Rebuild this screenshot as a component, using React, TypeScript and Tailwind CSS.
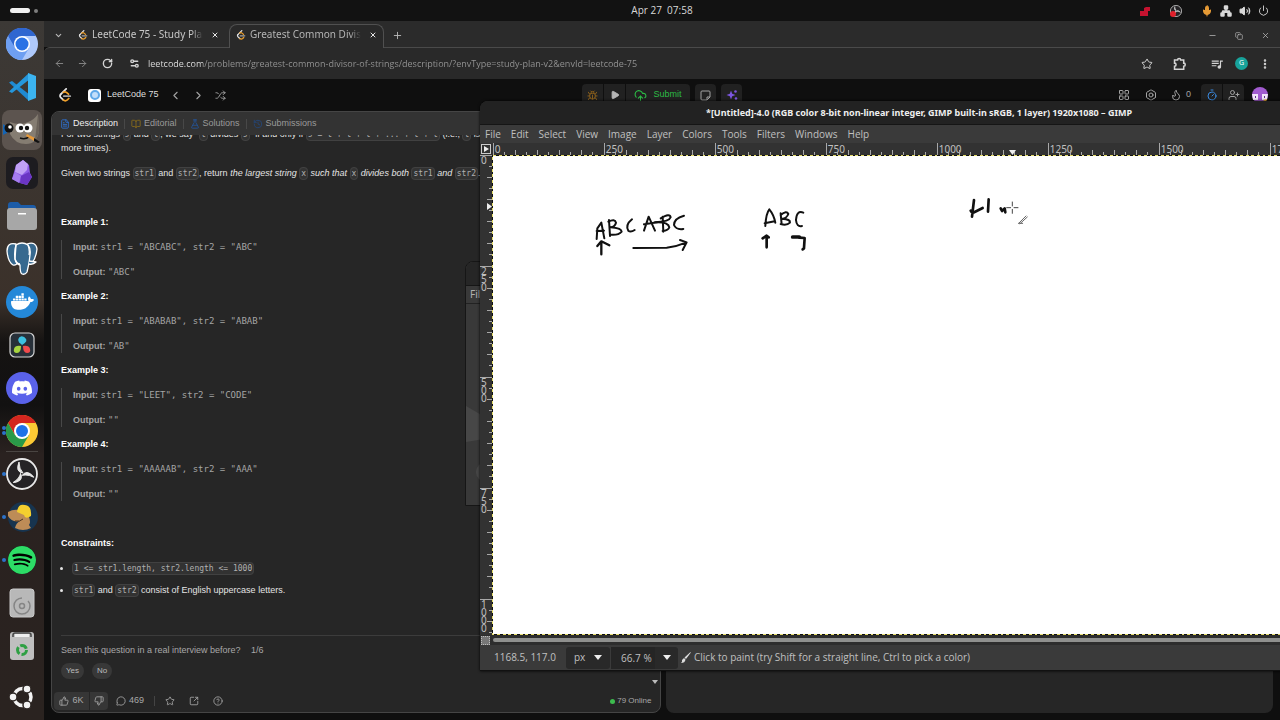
import type { ReactNode } from 'react';
import {
  ArrowLeft,
  ArrowRight,
  Bolt,
  BookOpen,
  Bug,
  ChevronDown,
  ChevronLeft,
  ChevronRight,
  CircleHelp,
  CloudUpload,
  Copy,
  EllipsisVertical,
  FileText,
  Flame,
  FlaskConical,
  History,
  LayoutGrid,
  MessageCircle,
  Mic,
  Minus,
  Network,
  Play,
  Plus,
  Power,
  RotateCw,
  Settings2,
  Shuffle,
  SquareArrowOutUpRight,
  Star,
  ThumbsDown,
  ThumbsUp,
  Timer,
  UserPlus,
  Volume2,
  X,
} from 'lucide-react';
import { MdQueueMusic } from 'react-icons/md';
import { SiDiscord, SiDocker, SiSpotify } from 'react-icons/si';

const LeetCodeLogo = ({ size }: { size: number }) => (
  <svg width={size} height={size} viewBox="0 0 24 24" fill="none" strokeWidth="3" strokeLinecap="round">
    <path d="M14 1.500 4.500 11" stroke="#e5e5e5" />
    <path d="M4.500 11q-2 2.500 0 5l4.500 4.500" stroke="#e5e5e5" />
    <path d="M9 20.500q3.500 3 7 0l2.500-2.500M9 7.500q3-2 5.500 0l3.500 3" stroke="#f0a02a" />
    <path d="M10 14h11" stroke="#a3a3a3" />
  </svg>
);

const ChromiumIcon = () => (
  <svg width="32" height="32" viewBox="0 0 32 32">
    <circle cx="16" cy="16" r="16" fill="#afc9fb" />
    <path d="M2 8A16 16 0 0 1 30 8H16L8 20z" fill="#2f66d0" />
    <path d="M2 8A16 16 0 0 0 16 32l7-12-13 1z" fill="#6e9ff2" />
    <circle cx="16" cy="16" r="8" fill="#fff" />
    <circle cx="16" cy="16" r="6.500" fill="#2a72e5" />
  </svg>
);

const ChromeIcon = () => (
  <svg width="32" height="32" viewBox="0 0 32 32">
    <circle cx="16" cy="16" r="16" fill="#fcc934" />
    <path d="M2.100 8A16 16 0 0 1 29.900 8H16L9 20z" fill="#d4261f" />
    <path d="M2.100 8A16 16 0 0 0 16 32l7-12-14 0z" fill="#2a9a48" />
    <circle cx="16" cy="16" r="8" fill="#fff" />
    <circle cx="16" cy="16" r="6" fill="#1d72e8" />
  </svg>
);

const VsCodeIcon = () => (
  <svg width="28" height="28" viewBox="0 0 28 28">
    <path d="M1 9.500 4 8l18 14-1 6z" fill="#1f8ad2" />
    <path d="M1 18.500 4 20 22 6l-1-6z" fill="#2597dc" />
    <path d="M20 0l8 3v22l-8 3z" fill="#3cb4f0" />
  </svg>
);

const GimpIcon = () => (
  <svg width="40" height="36" viewBox="0 0 40 36">
    <path d="M1 12l4 3v6l-4 2z" fill="#1565b5" />
    <path d="M8 10q10 4 18 0 6-2 10-8l1 17q-2 13-13 13T8 22z" fill="#857d72" />
    <path d="M36 2l1 17q-1 6-4 9z" fill="#6a6259" />
    <circle cx="7" cy="16" r="4.500" fill="#111" />
    <circle cx="8" cy="15" r="1.800" fill="#fff" />
    <circle cx="18" cy="16" r="4.500" fill="#fff" />
    <circle cx="26" cy="16" r="4.500" fill="#fff" />
    <circle cx="19" cy="16" r="2.200" fill="#111" />
    <circle cx="25" cy="16" r="2.200" fill="#111" />
    <path d="M18 26q6 2 10-2" stroke="#111" strokeWidth="1.500" fill="none" />
    <path d="M25 22l8 4-1 3-8-5z" fill="#e79a3a" />
    <path d="M32 26l6 4-2 1-4-2z" fill="#111" />
  </svg>
);

const ObsidianIcon = () => (
  <svg width="32" height="32" viewBox="0 0 32 32">
    <rect width="32" height="32" rx="7" fill="#1d1c20" />
    <path d="M17 3l6 5 1 8 2 4-5 8-7-2-8-4 2-7 2-7z" fill="#8d5be6" />
    <path d="M17 3l-7 5-1 7 7 3 5-5 1-6z" fill="#c0a0f5" />
    <path d="M9 15l6 4-2 7-7-4z" fill="#a57cf0" />
    <path d="M15 19l8-4 3 5-5 8-7-2z" fill="#6a35c4" />
  </svg>
);

const FilesIcon = () => (
  <svg width="30" height="28" viewBox="0 0 30 28">
    <path d="M1 3q0-3 3-3h7l3 3h12q3 0 3 3v6H1z" fill="#1c5ca8" />
    <rect y="6" width="30" height="22" rx="3" fill="#a7a7a7" />
    <rect x="11" y="11" width="8" height="1.500" fill="#fff" />
  </svg>
);

const PostgresIcon = () => (
  <svg width="32" height="34" viewBox="0 0 32 34" fill="#37698f" stroke="#fff" strokeWidth="1.300" strokeLinejoin="round">
    <path d="M10 2Q1 0 1 9q1 11 6 14 3 1 5-3z" />
    <path d="M21 2q9-3 10 5-1 9-5 14l-5-3z" />
    <path d="M10 3q6-4 12 0 3 4 2 10l-1 8-2 9q-2 3-5 2-2-1-2-9-4-1-5-6z" />
    <path d="M23 22q4 1 7-2l-7-1" />
    <path d="M10 3q-2 6-1 14 2 5 5 5M22 3q2 5 1 10" fill="none" />
  </svg>
);

const DavinciIcon = () => (
  <svg width="26" height="26" viewBox="0 0 26 26">
    <rect x="1" y="1" width="24" height="24" rx="5" fill="#273039" stroke="#d5d5d5" strokeWidth="1.200" />
    <path d="M13 13Q8 9 10 6t6 0-3 7z" fill="#3cc0e0" />
    <circle cx="13" cy="8" r="3.500" fill="#3cc0e0" />
    <path d="M12 14q0 7-4 7t-3-4 7-3z" fill="#a7d440" />
    <path d="M14 14q0 7 4 7t3-4-7-3z" fill="#ef4a4c" />
  </svg>
);

const ObsIcon = ({ size }: { size: number }) => (
  <svg width={size} height={size} viewBox="0 0 32 32" fill="none" stroke="#e8e8e8">
    <circle cx="16" cy="16" r="15" fill="#252326" strokeWidth="1.800" />
    {['rotate(0 16 16)', 'rotate(120 16 16)', 'rotate(240 16 16)'].map((turn) => (
      <path key={turn} d="M17 15Q9 14 13 4q0 7 4 11z" fill="#e8e8e8" strokeWidth="1" transform={turn} />
    ))}
  </svg>
);

const BeaverIcon = () => (
  <svg width="32" height="32" viewBox="0 0 32 32">
    <circle cx="17" cy="16" r="15" fill="#17344f" />
    <path d="M2 11q5-3 11-2l10 7q2 5 0 8l2 3q-8 4-16 0 1-5 5-7-8 2-12-5z" fill="#bd8c57" />
    <path d="M11 11q1-9 8-7 7 1 6 11-6 4-7-1z" fill="#f4cf2f" />
    <path d="M9 20q5 1 8-2" stroke="#4d3420" fill="none" />
  </svg>
);

const DriveIcon = () => (
  <svg width="26" height="30" viewBox="0 0 26 30" fill="none" stroke="#858585">
    <rect x="1" y="1" width="24" height="28" rx="3" fill="#b8b8b8" stroke="#c9c9c9" />
    <path d="M13 10a8 8 0 1 0 8 8q0-3-2-5" strokeWidth="1.500" />
    <circle cx="13" cy="18" r="2.500" strokeWidth="1.500" />
  </svg>
);

const TrashIcon = () => (
  <svg width="26" height="30" viewBox="0 0 26 30">
    <rect x="1" y="1" width="24" height="28" rx="3" fill="#bfbfbf" />
    <path d="M4 6V4q0-2 2-2h14q2 0 2 2v2" fill="none" stroke="#444" strokeWidth="1.500" />
    <path d="M6 3h14v3H6z" fill="#eee" />
    <circle cx="13" cy="19" r="4.500" fill="none" stroke="#2ea043" strokeWidth="3" strokeDasharray="7.400 2" />
  </svg>
);

const UbuntuIcon = () => (
  <svg width="26" height="26" viewBox="0 0 26 26">
    <circle cx="13.500" cy="13" r="8.500" fill="none" stroke="#f3f3f3" strokeWidth="3.500" />
    {[
      [4, 13],
      [18, 5],
      [18, 21],
    ].map(([x, y]) => (
      <circle key={`${x}-${y}`} cx={x} cy={y} r="4" fill="#f3f3f3" stroke="#2b2522" strokeWidth="1.500" />
    ))}
  </svg>
);

interface DockItem {
  name: string;
  icon: ReactNode;
  dots?: number;
  active?: boolean;
}

const pinnedApps: DockItem[] = [
  { name: 'Chromium', icon: <ChromiumIcon /> },
  { name: 'Visual Studio Code', icon: <VsCodeIcon /> },
  { name: 'GIMP', icon: <GimpIcon />, active: true },
  { name: 'Obsidian', icon: <ObsidianIcon /> },
  { name: 'Files', icon: <FilesIcon /> },
  { name: 'PostgreSQL', icon: <PostgresIcon /> },
  {
    name: 'Docker',
    icon: (
      <span className="flex size-8 items-center justify-center rounded-full bg-[#2488d8] text-white">
        <SiDocker size={23} />
      </span>
    ),
  },
  { name: 'DaVinci Resolve', icon: <DavinciIcon /> },
  {
    name: 'Discord',
    icon: (
      <span className="flex size-8 items-center justify-center rounded-full bg-[#5a62ea] text-white">
        <SiDiscord size={20} />
      </span>
    ),
  },
  { name: 'Google Chrome', icon: <ChromeIcon />, dots: 2 },
];

const runningApps: DockItem[] = [
  { name: 'OBS Studio', icon: <ObsIcon size={32} />, dots: 1 },
  { name: 'DBeaver', icon: <BeaverIcon />, dots: 1 },
  {
    name: 'Spotify',
    icon: (
      <span className="flex size-7 items-center justify-center rounded-full bg-black text-[#2ddc66]">
        <SiSpotify size={28} />
      </span>
    ),
    dots: 1,
  },
  { name: 'Disk', icon: <DriveIcon /> },
  { name: 'Trash', icon: <TrashIcon /> },
];

const DockButton = ({ name, icon, dots = 0, active }: DockItem) => (
  <button aria-label={name} className="relative flex h-[43px] w-full items-center justify-center">
    <span className="absolute left-0.5 flex flex-col gap-px">
      {Array.from({ length: dots }, (_, i) => (
        <span key={i} className="size-1 rounded-full bg-[#2c72c9]" />
      ))}
    </span>
    <span
      className={
        active
          ? 'flex size-10 items-center justify-center rounded-lg bg-[#5c544f]'
          : 'flex items-center justify-center'
      }
    >
      {icon}
    </span>
  </button>
);

const Dock = () => (
  <nav
    aria-label="Dock"
    className="flex w-11 shrink-0 flex-col bg-[linear-gradient(#3c3936_0%,#3b312a_40%,#151312_46%,#121111_55%,#2a2220_62%,#2a2320_100%)] pt-px"
  >
    {pinnedApps.map((app) => (
      <DockButton key={app.name} {...app} />
    ))}
    <hr className="mx-1.5 -mt-px border-[#4a4542]" />
    {runningApps.map((app) => (
      <DockButton key={app.name} {...app} />
    ))}
    <button aria-label="Show apps" className="mt-auto flex h-[46px] items-center justify-center">
      <UbuntuIcon />
    </button>
  </nav>
);

const TopBar = () => (
  <header className="grid h-[21px] shrink-0 grid-cols-3 items-center bg-[#121212] px-2.5 text-[#d8d8d8]">
    <div className="flex items-center gap-1">
      <span className="h-[5px] w-5 rounded-full bg-[#efefef]" />
      <span className="size-1 rounded-full bg-[#7e7e7e]" />
    </div>
    <time className="pl-11 text-center font-['Open_Sans',sans-serif] text-[10px] whitespace-pre">Apr 27  07:58</time>
    <div className="flex items-center justify-end gap-[7px] pr-px">
      <svg width="12" height="12" viewBox="0 0 12 12" className="mr-3" fill="#c4122f">
        <path d="M1 6h4V3l2-1h4v4H9v5H1z" />
      </svg>
      <span className="relative mr-3">
        <ObsIcon size={12} />
        <span className="absolute bottom-0 left-0 size-1.5 rounded-full bg-[#e0202c]" />
      </span>
      <Mic size={12} className="text-[#e59a35]" fill="#e59a35" />
      <Network size={12} strokeWidth={3} fill="currentColor" />
      <Volume2 size={12} fill="currentColor" />
      <Power size={11} />
    </div>
  </header>
);

const Tab = ({ title, active }: { title: string; active?: boolean }) => (
  <div
    className={
      active
        ? 'relative -mb-px flex h-6 w-[155px] items-center rounded-t-lg border border-b-0 border-[#505050] bg-[#292929] px-1.5 pb-1 text-[#b4b4b4]'
        : 'flex h-[23px] w-[157px] items-center px-1.5 pb-0.5 text-[#c8c8c8]'
    }
  >
    <LeetCodeLogo size={10} />
    <span className="ml-1 w-[111px] overflow-hidden mask-r-from-90% text-[10px] whitespace-nowrap">{title}</span>
    <button aria-label="Close tab" className="ml-2 text-[#e5e5e5]">
      <X size={8} strokeWidth={3} />
    </button>
  </div>
);

const BrowserChrome = () => (
  <>
    <div className="flex h-[26px] items-end bg-[#2b2b2b] text-[#b9b9b9]">
      <button aria-label="Search tabs" className="flex h-[23px] w-7 items-center justify-center">
        <ChevronDown size={9} strokeWidth={3} />
      </button>
      <Tab title="LeetCode 75 - Study Plan" />
      <Tab title="Greatest Common Divisor" active />
      <button aria-label="New tab" className="ml-2 flex h-[23px] items-center">
        <Plus size={11} />
      </button>
      <div className="ml-auto flex h-[23px] items-center gap-[18px] pr-2.5">
        <button aria-label="Minimize">
          <Minus size={9} />
        </button>
        <button aria-label="Restore">
          <Copy size={8} />
        </button>
        <button aria-label="Close">
          <X size={9} />
        </button>
      </div>
    </div>
    <div className="flex h-8 items-center rounded-tl-md border-t border-[#4a4a4a] bg-[#292929] pr-[9px] pl-2.5 text-[#d4d4d4]">
      <div className="flex items-center gap-3">
        <button aria-label="Back" className="text-[#8a8a8a]">
          <ArrowLeft size={11} />
        </button>
        <button aria-label="Forward" className="text-[#8a8a8a]">
          <ArrowRight size={11} />
        </button>
        <button aria-label="Reload" className="ml-0.5">
          <RotateCw size={11} strokeWidth={3} />
        </button>
        <Settings2 size={11} className="ml-1" strokeWidth={3} />
      </div>
      <input
        aria-label="Address"
        readOnly
        value="leetcode.com/problems/greatest-common-divisor-of-strings/description/?envType=study-plan-v2&envId=leetcode-75"
        className="ml-2 min-w-0 flex-1 bg-[linear-gradient(90deg,#e8e8e8_55px,#969696_55px)] bg-clip-text font-['Open_Sans',sans-serif] text-[9px] text-transparent outline-none"
      />
      <div className="flex items-center">
        <Star size={12} />
        <svg width="13" height="13" viewBox="0 0 17 17" className="ml-5" fill="none" stroke="currentColor" strokeWidth="2">
          <path d="M2 4h4a2 2 0 0 1 4 0h4v4a2 2 0 0 1 0 4v4H2v-4a2 2 0 0 0 0-4z" />
        </svg>
        <MdQueueMusic size={14} className="ml-6" />
        <span className="ml-[11px] flex size-[13px] items-center justify-center rounded-full bg-[#18a39b] text-[7px] text-white">
          G
        </span>
        <EllipsisVertical size={12} strokeWidth={3} className="ml-[11px]" />
      </div>
    </div>
  </>
);

const PageHeader = () => (
  <div className="flex h-8 items-center px-3.5 text-[#a3a3a3]">
    <div className="flex flex-1 items-center">
      <LeetCodeLogo size={14} />
      <span className="ml-4 flex size-[13px] items-center justify-center rounded-[3px] bg-white">
        <span className="size-2.5 rounded-full border-2 border-[#5fa8e8] bg-[#c2defa]" />
      </span>
      <a href="#plan" className="ml-1.5 text-[9px] text-[#dedede]">
        LeetCode 75
      </a>
      <button aria-label="Previous question" className="ml-2.5">
        <ChevronLeft size={13} />
      </button>
      <button aria-label="Next question" className="ml-2.5">
        <ChevronRight size={13} />
      </button>
      <button aria-label="Random question" className="ml-2.5">
        <Shuffle size={11} />
      </button>
    </div>
    <div className="flex h-[22px] gap-[5px]">
      <div className="flex gap-px overflow-hidden rounded">
        <button aria-label="Debug" className="flex w-[21px] items-center justify-center bg-[#212121] text-[#8f621c]">
          <Bug size={11} />
        </button>
        <button aria-label="Run" className="flex w-[21px] items-center justify-center bg-[#212121] text-[#b5b5b5]">
          <Play size={10} fill="currentColor" />
        </button>
        <button className="flex w-16 items-center justify-center gap-1.5 bg-[#212121] text-[9px] text-[#2cbb45]">
          <CloudUpload size={13} />
          Submit
        </button>
      </div>
      <button aria-label="Notes" className="flex w-[21px] items-center justify-center rounded bg-[#212121]">
        <svg width="11" height="11" viewBox="0 0 11 11" fill="none" stroke="currentColor">
          <path d="M2 1h7q1 0 1 1v5l-3 3H2q-1 0-1-1V2q0-1 1-1zM10 7H7v3" />
        </svg>
      </button>
      <button aria-label="Ask AI" className="flex w-[21px] items-center justify-center rounded bg-[#212121]">
        <svg width="12" height="12" viewBox="0 0 12 12" fill="#7c55e0">
          <path d="M5 1.500l1.200 3.300L9.500 6 6.200 7.200 5 10.500 3.800 7.200.5 6l3.300-1.200z" />
          <circle cx="9.500" cy="2.500" r="1.300" />
          <circle cx="10" cy="9.500" r="1.300" />
        </svg>
      </button>
    </div>
    <div className="flex flex-1 items-center justify-end">
      <LayoutGrid size={12} />
      <Bolt size={12} className="ml-[15px]" />
      <Flame size={12} className="ml-[13px]" />
      <span className="ml-1 text-[9px]">0</span>
      <div className="ml-2.5 flex h-[22px] gap-px overflow-hidden rounded">
        <button aria-label="Timer" className="flex w-[21px] items-center justify-center bg-[#212121] text-[#3a8ae0]">
          <Timer size={12} />
        </button>
        <button aria-label="Invite" className="flex w-[21px] items-center justify-center bg-[#212121]">
          <UserPlus size={12} />
        </button>
      </div>
      <svg width="16" height="16" viewBox="0 0 16 16" className="-mr-0.5 ml-2">
        <circle cx="8" cy="8" r="8" fill="#a25bd0" />
        <path d="M0 7h6v6H1zM10 7h6l-1 6h-5z" fill="#f1e4fa" />
        <path d="M3 9h1v2H3zM12 9h1v2h-1z" fill="#5a2b80" />
        <path d="M11 13l4-1-1 3z" fill="#f0b030" />
      </svg>
    </div>
  </div>
);

const Code = ({ children }: { children: ReactNode }) => (
  <code className="rounded border border-[#414141] bg-[#323232] px-px py-px font-['DejaVu_Sans_Mono',monospace] text-[8px] leading-none text-[#b0b0b0] not-italic">
    {children}
  </code>
);

const Sample = ({ label, value }: { label: string; value: string }) => (
  <p>
    <b>{label}:</b> <span className="font-['DejaVu_Sans_Mono',monospace] leading-none">{value}</span>
  </p>
);

const examples = [
  { input: 'str1 = "ABCABC", str2 = "ABC"', output: '"ABC"' },
  { input: 'str1 = "ABABAB", str2 = "ABAB"', output: '"AB"' },
  { input: 'str1 = "LEET", str2 = "CODE"', output: '""' },
  { input: 'str1 = "AAAAAB", str2 = "AAA"', output: '""' },
];

const panelTabs = [
  { label: 'Description', icon: <FileText size={10} className="text-[#2f73d8]" />, className: 'text-[#efefef]' },
  { label: 'Editorial', icon: <BookOpen size={10} className="text-[#8b6d1c]" />, className: 'text-[#9a9a9a]' },
  { label: 'Solutions', icon: <FlaskConical size={10} className="text-[#24569c]" />, className: 'text-[#9a9a9a]' },
  { label: 'Submissions', icon: <History size={10} className="text-[#24477c]" />, className: 'text-[#9a9a9a]' },
];

const DescriptionPanel = () => (
  <section className="relative flex flex-1 flex-col overflow-hidden rounded-lg border border-[#454545] bg-[#262626]">
    <div className="flex h-[23px] shrink-0 items-center bg-[#333333] px-2 text-[9px]">
      {panelTabs.map((tab, i) => (
        <div key={tab.label} className="flex items-center">
          {i > 0 && <span className="mx-1.5 h-2.5 w-px bg-[#484848]" />}
          <button className={`flex items-center gap-[3px] ${tab.className}`}>
            {tab.icon}
            {tab.label}
          </button>
        </div>
      ))}
    </div>
    <div className="min-h-0 flex-1 overflow-hidden px-[9px] text-[9px] leading-[14px] text-[#e4e4e4]">
      <p className="-mt-2 whitespace-nowrap">
        For two strings <Code>s</Code> and <Code>t</Code>, we say "<Code>t</Code> divides <Code>s</Code>" if and only if{' '}
        <Code>s = t + t + t + ... + t + t</Code> (i.e., <Code>t</Code> is concatenated
        <br />
        more times).
      </p>
      <p className="mt-[11px] whitespace-nowrap">
        Given two strings <Code>str1</Code> and <Code>str2</Code>, return{' '}
        <i>
          the largest string <Code>x</Code> such that <Code>x</Code> divides both <Code>str1</Code> and{' '}
          <Code>str2</Code>
        </i>
        .
      </p>
      <div className="mt-[33px]">
        {examples.map((example, i) => (
          <div key={i} className="pb-2">
            <h3 className="mb-[9px] leading-[18px] font-bold text-white">Example {i + 1}:</h3>
            <div className="flex h-[39px] flex-col justify-between border-l border-[#484848] pl-[11px] text-[#a4a4a4]">
              <Sample label="Input" value={example.input} />
              <Sample label="Output" value={example.output} />
            </div>
          </div>
        ))}
      </div>
      <h3 className="mt-[25px] leading-[18px] font-bold text-white">Constraints:</h3>
      <ul className="mt-[9px] flex list-disc flex-col gap-2 pl-[11px]">
        <li>
          <Code>{'1 <= str1.length, str2.length <= 1000'}</Code>
        </li>
        <li>
          <Code>str1</Code> and <Code>str2</Code> consist of English uppercase letters.
        </li>
      </ul>
      <hr className="mt-[38px] border-[#3c3c3c]" />
      <p className="mt-[7px] text-[#a8a8a8]">
        Seen this question in a real interview before? <span className="ml-2">1/6</span>
      </p>
      <div className="mt-1.5 flex gap-2 text-[8px] text-[#bcbcbc]">
        <button className="h-4 rounded-full bg-[#383838] px-[5px]">Yes</button>
        <button className="h-4 rounded-full bg-[#383838] px-[5px]">No</button>
      </div>
    </div>
    <svg width="6" height="4" className="absolute right-0.5 bottom-7" fill="#bbb">
      <path d="M0 0h6L3 4z" />
    </svg>
    <div className="flex h-[22px] shrink-0 items-center px-0.5 text-[9px] text-[#a8a8a8]">
      <div className="flex h-[18px] gap-px overflow-hidden rounded">
        <button className="flex w-[35px] items-center justify-center gap-[3px] bg-[#363636]">
          <ThumbsUp size={10} />
          6K
        </button>
        <button aria-label="Dislike" className="flex w-[18px] items-center justify-center bg-[#363636]">
          <ThumbsDown size={10} />
        </button>
      </div>
      <button className="ml-2 flex items-center gap-[3px]">
        <MessageCircle size={10} />
        469
      </button>
      <span className="mx-2.5 h-2.5 w-px bg-[#444444]" />
      <div className="flex gap-3.5">
        <button aria-label="Favorite">
          <Star size={10} />
        </button>
        <button aria-label="Share">
          <SquareArrowOutUpRight size={10} />
        </button>
        <button aria-label="Help">
          <CircleHelp size={10} />
        </button>
      </div>
      <span className="mr-1.5 ml-auto flex items-center gap-0.5 text-[8px]">
        <span className="size-[5px] rounded-full bg-[#3dbb4e]" />
        79 Online
      </span>
    </div>
  </section>
);

const Browser = () => (
  <main className="flex min-w-0 flex-1 flex-col bg-[#0f0f0f]">
    <BrowserChrome />
    <div className="flex min-h-0 flex-1 flex-col font-['Liberation_Sans',Arial,sans-serif]">
      <PageHeader />
      <div className="flex min-h-0 flex-1 gap-[5px] pr-[7px] pb-[7px] pl-[7px]">
        <DescriptionPanel />
        <section aria-label="Code editor" className="flex-1 rounded-lg bg-[#262626]" />
      </div>
    </div>
  </main>
);

const rulerMarks = [0, 250, 500, 750, 1000, 1250, 1500, 1750];
const ticks = [1, 2, 3, 4, 5, 6, 7, 8, 9];

const HorizontalRuler = () => (
  <div className="relative flex h-3 overflow-hidden">
    {rulerMarks.map((mark) => (
      <div key={mark} className="relative h-full w-[111px] shrink-0 border-l border-[#a8a8a8] pl-px">
        <svg width="110" height="12" className="absolute inset-0" stroke="#a8a8a8">
          {ticks.map((n) => (
            <path key={n} d={`M${n * 11 - 0.5} 12v${n % 2 ? -3 : -5}`} />
          ))}
        </svg>
        <span className="block text-[10px] leading-3">{mark}</span>
      </div>
    ))}
    <svg width="7" height="5" className="absolute bottom-0 left-[516px]" fill="#eee">
      <path d="M0 0h7L3.500 5z" />
    </svg>
  </div>
);

const VerticalRuler = () => (
  <div className="relative w-3 shrink-0 overflow-hidden bg-[#323232]">
    {rulerMarks.slice(0, 5).map((mark) => (
      <div key={mark} className="relative h-[111px] border-t border-[#a8a8a8] pl-px">
        <svg width="12" height="110" className="absolute inset-0" stroke="#a8a8a8">
          {ticks.map((n) => (
            <path key={n} d={`M12 ${n * 11 - 0.5}h${n % 2 ? -3 : -5}`} />
          ))}
        </svg>
        <span className="block w-1.5 text-[10px] leading-2 break-all">{mark}</span>
      </div>
    ))}
    <svg width="5" height="7" className="absolute top-12 right-0" fill="#eee">
      <path d="M0 0v7l5-3.500z" />
    </svg>
  </div>
);

// Brush strokes are stored at three times their size on the canvas.
const Sketch = () => (
  <svg className="block h-full w-full bg-white" fill="none" stroke="#111" strokeLinecap="round" strokeLinejoin="round">
    <g transform="translate(77 34) scale(.3333)" strokeWidth="6">
      <path d="M80 147l2-32 12-17 9 47M80 123l22-1" />
      <path d="M117 90l3 48M115 95q20-10 23 3-3 12-16 14 33 3 33 13-10 12-35 9" />
      <path d="M186 88q-21 17-11 34 7 6 19-2" />
      <path d="M222 122l14-42 19 42M222 103l40-6" />
      <path d="M278 80l2 45M272 85q28-17 30-3-4 13-47 15 40-2 43 15-3 10-20 11" />
      <path d="M342 77q-30 8-30 28 6 15 28 12" />
      <path d="M94 193v-38M82 168l12-14 24 12" strokeWidth="7" />
      <path d="M190 174l100-1q30-3 58-15M330 150l20 7-12 23" />
      <path d="M586 108q2-38 12-50 14 17 18 40M584 100l30-6" />
      <path d="M632 70l3 33M632 75q18-15 23-3-5 13-18 14 25 2 23 12-10 10-28 4" />
      <path d="M700 68q-20-8-22 22 2 22 18 18" />
      <path d="M590 172v-34M578 145l12-8 6 5" strokeWidth="8" />
      <path d="M668 141h20" strokeWidth="11" />
      <path d="M688 143l16 1-2 31-4 3" strokeWidth="8" />
    </g>
    <g transform="translate(457 24) scale(.3333)" strokeWidth="8">
      <path d="M72 60l-6 50M62 92q5 10 12 4l24-12M116 58l-2 37M152 85l4 8 8-8 2 12" />
      <path d="M170 83h12M192 83h12M187 66v12M187 88v12" strokeWidth="3" stroke="#444" />
      <path d="M206 130l22-22M210 131l22-20M206 130h12" strokeWidth="3" stroke="#666" />
    </g>
  </svg>
);

const menus = ['File', 'Edit', 'Select', 'View', 'Image', 'Layer', 'Colors', 'Tools', 'Filters', 'Windows', 'Help'];

const DownTriangle = () => (
  <svg width="8" height="5" fill="#eeeeee" className="pointer-events-none">
    <path d="M0 0h8L4 5z" />
  </svg>
);

const GimpWindow = () => (
  <section className="absolute top-[101px] left-[480px] flex h-[570px] w-[878px] flex-col overflow-hidden rounded-t-lg border-b border-[#111111] bg-[#323232] text-[#c0c0c0] shadow-[0_0_3px_#000]">
    <h1 className="flex h-6 shrink-0 items-center justify-center border-b border-[#151515] bg-[#222222] text-[9px] font-bold whitespace-nowrap text-[#efefef]">
      *[Untitled]-4.0 (RGB color 8-bit non-linear integer, GIMP built-in sRGB, 1 layer) 1920x1080 – GIMP
    </h1>
    <div className="flex h-[18px] shrink-0 items-center gap-2.5 bg-[#3a3a3a] px-[5px] font-['Open_Sans',sans-serif] text-[10px]">
      {menus.map((menu) => (
        <button key={menu}>{menu}</button>
      ))}
    </div>
    <div className="flex h-3 shrink-0">
      <button aria-label="Image menu" className="mr-px flex w-3 items-center justify-center">
        <svg width="10" height="10" viewBox="0 0 10 10">
          <rect x=".5" y=".5" width="9" height="9" fill="#333" stroke="#ccc" />
          <path d="M3 2l5 3-5 3z" fill="#eee" />
        </svg>
      </button>
      <HorizontalRuler />
    </div>
    <div className="flex min-h-0 flex-1">
      <VerticalRuler />
      <div className="min-w-0 flex-1 bg-[repeating-linear-gradient(45deg,#e6dd6a_0_2px,#111_2px_4px)] py-px pl-px">
        <Sketch />
      </div>
    </div>
    <div className="flex h-2.5 shrink-0 items-center bg-[#2d2d2d]">
      <span className="w-[13px] pl-px">
        <span className="block size-[9px] border border-dotted border-[#bbbbbb] bg-[#777777]" />
      </span>
      <span className="h-1 flex-1 rounded-full bg-[#8f908e]" />
    </div>
    <footer className="flex h-[25px] shrink-0 items-center bg-[#3a3a3a] pl-3.5 font-['Open_Sans',sans-serif] text-[10px]">
      <span className="w-[72px]">1168.5, 117.0</span>
      <label className="relative flex h-[22px] w-11 items-center rounded-[3px] bg-[#292929]">
        <select aria-label="Unit" className="h-full w-full appearance-none pl-2 outline-none">
          <option>px</option>
        </select>
        <span className="pointer-events-none absolute right-2">
          <DownTriangle />
        </span>
      </label>
      <div className="ml-px flex h-[22px] w-[67px] items-center rounded-[3px] bg-[#292929]">
        <input aria-label="Zoom" readOnly value="66.7 %" className="h-full w-11 bg-[#252525] pl-2.5 outline-none" />
        <button aria-label="Zoom presets" className="flex h-full flex-1 items-center justify-center">
          <DownTriangle />
        </button>
      </div>
      <svg width="10" height="11" viewBox="0 0 10 11" className="mx-[3px]" fill="#ddd">
        <path d="M9.500 0Q10 .5 9.500 1L5 7 3.500 5.500zM3 6l1.500 1.500Q4 11 0 11q1.500-1 1-3z" />
      </svg>
      <span>Click to paint (try Shift for a straight line, Ctrl to pick a color)</span>
    </footer>
  </section>
);

// Sits behind the main window, only its left edge shows.
const GimpToolbox = () => (
  <section className="absolute top-[261px] left-[465px] h-[245px] w-20 overflow-hidden rounded-t-lg border border-[#161616] bg-[#393939]">
    <div className="h-6 border-b border-[#161616] bg-[#262626]" />
    <div className="h-[18px] border-b border-[#222222] pl-1 text-[10px] leading-[17px] text-[#b0b0b0]">File</div>
    <svg width="60" height="200" fill="#474747">
      <path d="M0 102l24 14v18L0 138z" />
      <circle cx="20" cy="168" r="10" />
    </svg>
  </section>
);

const App = () => {
  return (
    <div className="relative flex h-screen flex-col overflow-hidden bg-[#121212] font-['Noto_Sans',sans-serif]">
      <TopBar />
      <div className="flex min-h-0 flex-1">
        <Dock />
        <Browser />
      </div>
      <GimpToolbox />
      <GimpWindow />
    </div>
  );
};

export default App;
